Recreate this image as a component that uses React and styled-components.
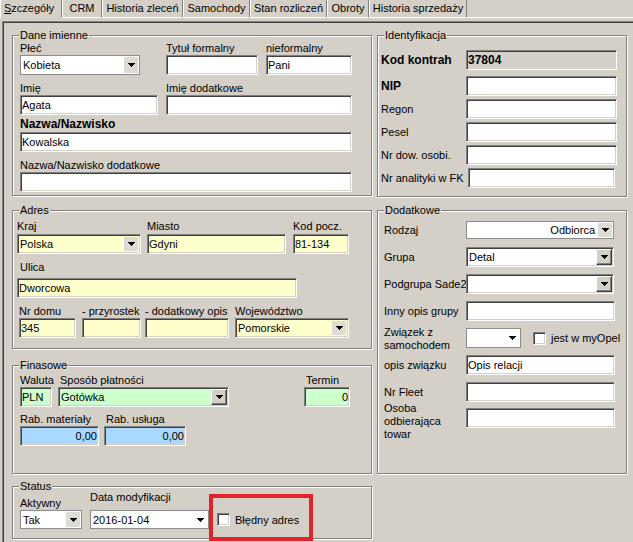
import React from 'react'
import styled, { createGlobalStyle, css } from 'styled-components'

const GlobalStyle = createGlobalStyle`
  html, body {
    margin: 0;
    padding: 0;
    background: #d4d0c8;
  }
  body {
    font-family: "Liberation Sans", Arial, sans-serif;
    font-size: 11px;
    color: #000;
  }
`

const YELLOW = '#ffffcc'
const GREEN = '#ccffcc'
const BLUE = '#a9d9ff'
const FACE = '#d4d0c8'

const sunken = css`
  border: 1px solid;
  border-color: #808080 #ffffff #ffffff #808080;
  box-shadow: inset 1px 1px 0 #404040, inset -1px -1px 0 ${FACE};
  padding: 1px;
`

const Window = styled.div`
  width: 633px;
  height: 542px;
  overflow: hidden;
  background: ${FACE};
`

const TabStrip = styled.div`
  display: flex;
  height: 18px;
`

const Tab = styled.div`
  box-sizing: border-box;
  flex: none;
  width: ${p => p.$w}px;
  height: 18px;
  line-height: 17px;
  white-space: nowrap;
  text-align: ${p => (p.$active ? 'left' : 'center')};
  padding-left: ${p => (p.$active ? 3 : 0)}px;
  border-left: 1px solid #ffffff;
  border-right: 1px solid #808080;
  border-bottom: 1px solid ${p => (p.$active ? 'transparent' : '#ffffff')};
`

const TabFill = styled.div`
  flex: 1;
  border-bottom: 1px solid #ffffff;
`

const TabPage = styled.div`
  box-sizing: border-box;
  height: 521px;
  margin: 3px 0 0 2px;
  padding: 13px 0 0 9px;
  border-top: 1px solid #808080;
  border-left: 1px solid #808080;
  box-shadow: inset 1px 1px 0 #404040;
  display: flex;
  gap: 5px;
`

const Column = styled.div`
  display: flex;
  flex-direction: column;
  flex: none;
  width: ${p => p.$w}px;
`

const GroupBox = styled.div`
  position: relative;
  box-sizing: border-box;
  height: ${p => p.$h}px;
  margin-top: ${p => p.$mt || 0}px;
  padding: ${p => p.$pad};
  border: 1px solid #808080;
  box-shadow: inset 1px 1px 0 #ffffff, 1px 1px 0 #ffffff;
`

const Caption = styled.span`
  position: absolute;
  top: -7px;
  left: 6px;
  padding: 0 1px;
  line-height: 13px;
  background: ${FACE};
`

const Row = styled.div`
  display: flex;
  align-items: ${p => p.$align || 'flex-start'};
  margin-top: ${p => p.$mt || 0}px;
`

const Field = styled.div`
  display: flex;
  flex-direction: column;
  flex: none;
  width: ${p => p.$w}px;
  margin-left: ${p => p.$ml || 0}px;
`

const Label = styled.div`
  height: 14px;
  line-height: 14px;
  white-space: nowrap;
  padding-left: ${p => p.$indent || 0}px;
  margin-bottom: ${p => p.$mb || 0}px;
  font-weight: ${p => (p.$bold ? 'bold' : 'normal')};
  font-size: ${p => (p.$bold ? 12 : 11)}px;
`

const TextBox = styled.div`
  box-sizing: border-box;
  ${sunken}
  flex: none;
  width: ${p => (p.$w ? `${p.$w}px` : '100%')};
  height: ${p => p.$h || 20}px;
  margin-left: ${p => p.$ml || 0}px;
  line-height: 16px;
  background: ${p => p.$bg || '#ffffff'};
  text-align: ${p => (p.$right ? 'right' : 'left')};
  font-weight: ${p => (p.$bold ? 'bold' : 'normal')};
  font-size: ${p => (p.$bold ? 12 : 11)}px;
  white-space: nowrap;
  overflow: hidden;
`

const ComboFrame = styled.div`
  box-sizing: border-box;
  display: flex;
  flex: none;
  width: ${p => (p.$w ? `${p.$w}px` : '100%')};
  height: ${p => p.$h || 20}px;
  background: ${p => p.$bg || '#ffffff'};
  ${p => (p.$flat ? css`border: 1px solid #8c8c8c;` : sunken)}
`

const ComboValue = styled.div`
  flex: 1;
  min-width: 0;
  display: flex;
  align-items: center;
  justify-content: ${p => (p.$right ? 'flex-end' : 'flex-start')};
  padding: 0 ${p => (p.$right ? 2 : 0)}px 0 ${p => (p.$flat ? 2 : 1)}px;
  white-space: nowrap;
  overflow: hidden;
`

const DropButton = styled.div`
  box-sizing: border-box;
  flex: none;
  display: flex;
  align-items: center;
  justify-content: center;
  width: ${p => (p.$raised ? 16 : 14)}px;
  margin: ${p => (p.$raised ? '0' : '1px')};
  background: ${p => (p.$plain ? 'transparent' : '#dedbd5')};
  ${p =>
    p.$raised &&
    css`
      background: ${FACE};
      border: 1px solid;
      border-color: #ffffff #404040 #404040 #ffffff;
      box-shadow: inset -1px -1px 0 #808080;
    `}
`

const CheckItem = styled.div`
  display: flex;
  align-items: center;
  flex: none;
  margin-left: ${p => p.$ml || 0}px;
  margin-bottom: ${p => p.$mb || 0}px;
`

const CheckBox = styled.div`
  box-sizing: border-box;
  flex: none;
  width: 13px;
  height: 13px;
  background: #ffffff;
  border: 1px solid;
  border-color: #808080 #ffffff #ffffff #808080;
  box-shadow: inset 1px 1px 0 #404040, inset -1px -1px 0 ${FACE};
`

const CheckLabel = styled.span`
  margin-left: ${p => p.$ml || 5}px;
  white-space: nowrap;
`

const SideRow = styled.div`
  display: flex;
  align-items: center;
  height: 20px;
  margin-top: ${p => p.$mt || 0}px;
`

const SideLabel = styled.div`
  flex: none;
  width: ${p => p.$w}px;
  line-height: 13px;
  white-space: nowrap;
  padding-top: 1px;
  margin-top: ${p => p.$dy || 0}px;
  font-weight: ${p => (p.$bold ? 'bold' : 'normal')};
  font-size: ${p => (p.$bold ? 12 : 11)}px;
`

const Highlight = styled.div`
  position: absolute;
  box-sizing: border-box;
  left: 196px;
  top: 7px;
  width: 104px;
  height: 47px;
  border: 4px solid #e2232a;
  pointer-events: none;
`

const Arrow = () => (
  <svg width="7" height="4" viewBox="0 0 7 4">
    <path d="M0 0h7v1H6v1H5v1H4v1H3V3H2V2H1V1H0z" fill="#000" />
  </svg>
)

const Combo = ({ w, h, bg, flat, raised, plain, right, children }) => (
  <ComboFrame $w={w} $h={h} $bg={bg} $flat={flat}>
    <ComboValue $right={right} $flat={flat}>{children}</ComboValue>
    <DropButton $raised={raised} $plain={plain}>
      <Arrow />
    </DropButton>
  </ComboFrame>
)

const tabs = [
  { label: 'Szczegóły', w: 62, active: true },
  { label: 'CRM', w: 40 },
  { label: 'Historia zleceń', w: 81 },
  { label: 'Samochody', w: 67 },
  { label: 'Stan rozliczeń', w: 77 },
  { label: 'Obroty', w: 42 },
  { label: 'Historia sprzedaży', w: 98 },
]

const identRows = [
  { label: 'Kod kontrah', bold: true, value: '37804', bg: FACE, mt: 0 },
  { label: 'NIP', bold: true, mt: 6 },
  { label: 'Regon', mt: 3 },
  { label: 'Pesel', mt: 3 },
  { label: 'Nr dow. osobi.', mt: 3 },
  { label: 'Nr analityki w FK', mt: 3, ml: 2, w: 147 },
]

const App = () => (
  <Window>
    <GlobalStyle />
    <TabStrip>
      {tabs.map(t => (
        <Tab key={t.label} $w={t.w} $active={t.active}>
          {t.active ? (
            <>
              <u>S</u>
              {t.label.slice(1)}
            </>
          ) : (
            t.label
          )}
        </Tab>
      ))}
      <TabFill />
    </TabStrip>

    <TabPage>
      <Column $w={360}>
        <GroupBox $h={161} $pad="5px 0 0 7px">
          <Caption>Dane imienne</Caption>
          <Row>
            <Field $w={120}>
              <Label>Płeć</Label>
              <Combo w={120} flat>Kobieta</Combo>
            </Field>
            <Field $w={92} $ml={26}>
              <Label>Tytuł formalny</Label>
              <TextBox />
            </Field>
            <Field $w={86} $ml={8}>
              <Label>nieformalny</Label>
              <TextBox>Pani</TextBox>
            </Field>
          </Row>
          <Row $mt={6}>
            <Field $w={138}>
              <Label>Imię</Label>
              <TextBox>Agata</TextBox>
            </Field>
            <Field $w={186} $ml={8}>
              <Label>Imię dodatkowe</Label>
              <TextBox />
            </Field>
          </Row>
          <Row $mt={2}>
            <Field $w={332}>
              <Label $bold $mb={1}>Nazwa/Nazwisko</Label>
              <TextBox>Kowalska</TextBox>
            </Field>
          </Row>
          <Row $mt={6}>
            <Field $w={332}>
              <Label>Nazwa/Nazwisko dodatkowe</Label>
              <TextBox />
            </Field>
          </Row>
        </GroupBox>

        <GroupBox $h={139} $mt={14} $pad="8px 0 0 4px">
          <Caption>Adres</Caption>
          <Row>
            <Field $w={124}>
              <Label $mb={1}>Kraj</Label>
              <Combo w={124} bg={YELLOW}>Polska</Combo>
            </Field>
            <Field $w={139} $ml={6}>
              <Label $mb={1}>Miasto</Label>
              <TextBox $bg={YELLOW}>Gdyni</TextBox>
            </Field>
            <Field $w={56} $ml={7}>
              <Label $mb={1}>Kod pocz.</Label>
              <TextBox $bg={YELLOW}>81-134</TextBox>
            </Field>
          </Row>
          <Row $mt={6}>
            <Field $w={280}>
              <Label $indent={3} $mb={4}>Ulica</Label>
              <TextBox $bg={YELLOW}>Dworcowa</TextBox>
            </Field>
          </Row>
          <Row $mt={6}>
            <Field $w={57} $ml={2}>
              <Label>Nr domu</Label>
              <TextBox $bg={YELLOW}>345</TextBox>
            </Field>
            <Field $w={59} $ml={6}>
              <Label>- przyrostek</Label>
              <TextBox $bg={YELLOW} />
            </Field>
            <Field $w={84} $ml={4}>
              <Label>- dodatkowy opis</Label>
              <TextBox $bg={YELLOW} />
            </Field>
            <Field $w={114} $ml={6}>
              <Label>Województwo</Label>
              <Combo w={114} bg={YELLOW}>Pomorskie</Combo>
            </Field>
          </Row>
        </GroupBox>

        <GroupBox $h={109} $mt={16} $pad="7px 0 0 7px">
          <Caption>Finasowe</Caption>
          <Row>
            <Field $w={32}>
              <Label>Waluta</Label>
              <TextBox $bg={GREEN}>PLN</TextBox>
            </Field>
            <Field $w={171} $ml={6}>
              <Label $indent={2}>Sposób płatności</Label>
              <Combo w={171} bg={GREEN} raised>Gotówka</Combo>
            </Field>
            <Field $w={46} $ml={75}>
              <Label $indent={2}>Termin</Label>
              <TextBox $bg={GREEN} $right>0</TextBox>
            </Field>
          </Row>
          <Row $mt={5}>
            <Field $w={79}>
              <Label>Rab. materiały</Label>
              <TextBox $bg={BLUE} $right>0,00</TextBox>
            </Field>
            <Field $w={82} $ml={5}>
              <Label $indent={2}>Rab. usługa</Label>
              <TextBox $bg={BLUE} $right>0,00</TextBox>
            </Field>
          </Row>
        </GroupBox>

        <GroupBox $h={53} $mt={12} $pad="3px 0 0 7px">
          <Caption>Status</Caption>
          <Row $align="flex-end">
            <Field $w={62}>
              <Label>Aktywny</Label>
              <Combo w={62} h={19} flat>Tak</Combo>
            </Field>
            <Field $w={119} $ml={8}>
              <Label $mb={6}>Data modyfikacji</Label>
              <Combo w={119} h={19} flat plain>2016-01-04</Combo>
            </Field>
            <CheckItem $ml={8} $mb={3}>
              <CheckBox />
              <CheckLabel $ml={5}>Błędny adres</CheckLabel>
            </CheckItem>
          </Row>
          <Highlight />
        </GroupBox>
      </Column>

      <Column $w={250}>
        <GroupBox $h={162} $pad="14px 0 0 3px">
          <Caption>Identyfikacja</Caption>
          {identRows.map(r => (
            <SideRow key={r.label} $mt={r.mt}>
              <SideLabel $w={85} $bold={r.bold}>{r.label}</SideLabel>
              <TextBox $w={r.w || 151} $ml={r.ml} $bg={r.bg} $bold={r.bold}>
                {r.value}
              </TextBox>
            </SideRow>
          ))}
        </GroupBox>

        <GroupBox $h={264} $mt={13} $pad="9px 0 0 6px">
          <Caption>Dodatkowe</Caption>
          <SideRow>
            <SideLabel $w={82}>Rodzaj</SideLabel>
            <Combo w={148} h={18} flat right>Odbiorca</Combo>
          </SideRow>
          <SideRow $mt={7}>
            <SideLabel $w={82}>Grupa</SideLabel>
            <Combo w={148} raised>Detal</Combo>
          </SideRow>
          <SideRow $mt={7}>
            <SideLabel $w={82}>Podgrupa Sade2</SideLabel>
            <Combo w={148} raised />
          </SideRow>
          <SideRow $mt={7}>
            <SideLabel $w={82}>Inny opis grupy</SideLabel>
            <TextBox $w={149} />
          </SideRow>
          <SideRow $mt={7}>
            <SideLabel $w={82}>
              Związek z<br />
              samochodem
            </SideLabel>
            <Combo w={55} flat plain />
            <CheckItem $ml={12}>
              <CheckBox />
              <CheckLabel $ml={5}>jest w myOpel</CheckLabel>
            </CheckItem>
          </SideRow>
          <SideRow $mt={7}>
            <SideLabel $w={82}>opis związku</SideLabel>
            <TextBox $w={149}>Opis relacji</TextBox>
          </SideRow>
          <SideRow $mt={7}>
            <SideLabel $w={82}>Nr Fleet</SideLabel>
            <TextBox $w={149} />
          </SideRow>
          <SideRow $mt={6}>
            <SideLabel $w={82} $dy={6}>
              Osoba<br />
              odbierająca<br />
              towar
            </SideLabel>
            <TextBox $w={149} />
          </SideRow>
        </GroupBox>
      </Column>
    </TabPage>
  </Window>
)

export default App
